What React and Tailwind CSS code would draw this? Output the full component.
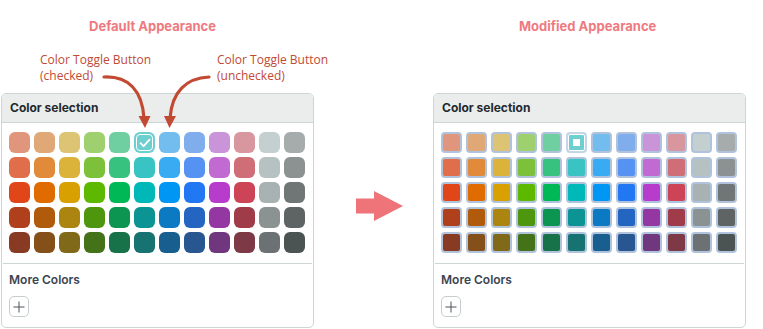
const ROWS = [
  ['#e0957d', '#e0a877', '#dcc474', '#9fd070', '#6fcfa0', '#6dcfd0', '#72bcee', '#80aeec', '#c994d8', '#d8969e', '#c4cfcf', '#a6acac'],
  ['#e06e4a', '#e08a3a', '#dcb33a', '#7dc13a', '#37c37f', '#39c3c3', '#38abf3', '#5592f2', '#c06ad2', '#d06e78', '#b6c1c1', '#8c9292'],
  ['#e04618', '#e06b00', '#d8a000', '#5db800', '#00b855', '#00b8b8', '#0096f4', '#2277f2', '#b83ccc', '#cc4455', '#a8b2b2', '#707676'],
  ['#b0401b', '#b05b0c', '#ac8410', '#4f960f', '#0c9550', '#0c9494', '#0b7ac2', '#2465c2', '#9437a2', '#a03c4a', '#8a9292', '#5d6463'],
  ['#883a22', '#854f1a', '#806a1a', '#437219', '#177249', '#177272', '#185f8f', '#275690', '#70377f', '#7d3a46', '#6c7273', '#4c5453'],
]

const font = { fontFamily: 'Inter, "Noto Sans", sans-serif' }

function DefaultSwatch({ color, checked }) {
  return (
    <div
      className="relative flex h-[21px] w-[21px] items-center justify-center rounded-[6px]"
      style={{ backgroundColor: color }}
    >
      {checked && (
        <>
          <div className="absolute inset-[2px] rounded-[4px] border border-white" />
          <svg width="12" height="10" viewBox="0 0 12 10" fill="none">
            <path d="M1.5 5.2 L4.6 8.2 L10.5 1.6" stroke="white" strokeWidth="1.8" strokeLinecap="round" strokeLinejoin="round" />
          </svg>
        </>
      )}
    </div>
  )
}

function ModifiedSwatch({ color, checked }) {
  return (
    <div
      className={`relative flex h-[21px] w-[21px] items-center justify-center rounded-[4px] border-2 ${checked ? 'border-[#c6d5ea]' : 'border-[#b1c3dc]'}`}
      style={{ backgroundColor: color }}
    >
      {checked && (
        <>
          <div className="absolute inset-0 rounded-[2px] border border-white" />
          <div className="h-[7px] w-[7px] bg-white" />
        </>
      )}
    </div>
  )
}

function Panel({ modified }) {
  const Swatch = modified ? ModifiedSwatch : DefaultSwatch
  return (
    <div className="h-[235px] w-[313px] overflow-hidden rounded-[5px] border border-[#cdd6d6] bg-white" style={font}>
      <div className="flex h-[29px] items-center border-b border-[#cdd6d6] bg-[#ebeded] px-[8px] text-[12px] font-bold text-[#23292d]">
        Color selection
      </div>
      <div className="flex flex-col gap-[4px] px-[7px] pt-[9px]">
        {ROWS.map((row, r) => (
          <div key={r} className="flex gap-[4px]">
            {row.map((c, i) => (
              <Swatch key={i} color={c} checked={r === 0 && i === 5} />
            ))}
          </div>
        ))}
      </div>
      <div className="mx-[1px] mt-[10px] border-t border-[#cdd6d6]" />
      <div className="px-[7px] pt-[7px] text-[12px] font-semibold text-[#3b4450]">More Colors</div>
      <div className="px-[7px] pt-[7px]">
        <div className="flex h-[21px] w-[20px] items-center justify-center rounded-[5px] border border-[#c5cdcd]">
          <svg width="12" height="12" viewBox="0 0 12 12">
            <path d="M6 0.5 V11.5 M0.5 6 H11.5" stroke="#4a5257" strokeWidth="1" />
          </svg>
        </div>
      </div>
    </div>
  )
}

export default function App() {
  return (
    <div className="relative h-[329px] w-[763px] bg-white" style={{ fontFamily: '"Open Sans", sans-serif' }}>
      <div className="flex items-start">
        <div className="ml-[1px] flex w-[313px] flex-col">
          <div className="h-[93px] pt-[17px] pl-[88px] text-[13px] font-bold text-[#ee7a80]" style={font}>
            Default Appearance
          </div>
          <Panel />
        </div>
        <div className="flex w-[119px] justify-center pt-[191px]">
          <svg width="48" height="30" viewBox="0 0 48 30" className="ml-[12px]">
            <polygon points="0,7.5 18,7.5 18,0 47,15 18,30 18,22.5 0,22.5" fill="#ee7479" />
          </svg>
        </div>
        <div className="flex w-[313px] flex-col">
          <div className="h-[93px] pt-[17px] pl-[86px] text-[13px] font-bold text-[#ee7a80]" style={font}>
            Modified Appearance
          </div>
          <Panel modified />
        </div>
      </div>

      <div className="absolute left-[40px] top-[52px] text-[12px] leading-[16px] text-[#c24a33]">
        Color Toggle Button
        <br />
        (checked)
      </div>
      <div className="absolute left-[217px] top-[52px] text-[12px] leading-[16px] text-[#c24a33]">
        Color Toggle Button
        <br />
        (unchecked)
      </div>
      <svg className="pointer-events-none absolute left-0 top-0" width="330" height="140" viewBox="0 0 330 140">
        <path d="M104 77 C128 76 142 90 144 118" stroke="#c24a33" strokeWidth="3.2" fill="none" strokeLinecap="round" />
        <polygon points="138.5,116 150.5,116 145,128" fill="#c24a33" />
        <path d="M209 77 C186 78 172 92 170 118" stroke="#c24a33" strokeWidth="3.2" fill="none" strokeLinecap="round" />
        <polygon points="164,116 176,116 169.5,128" fill="#c24a33" />
      </svg>
    </div>
  )
}
